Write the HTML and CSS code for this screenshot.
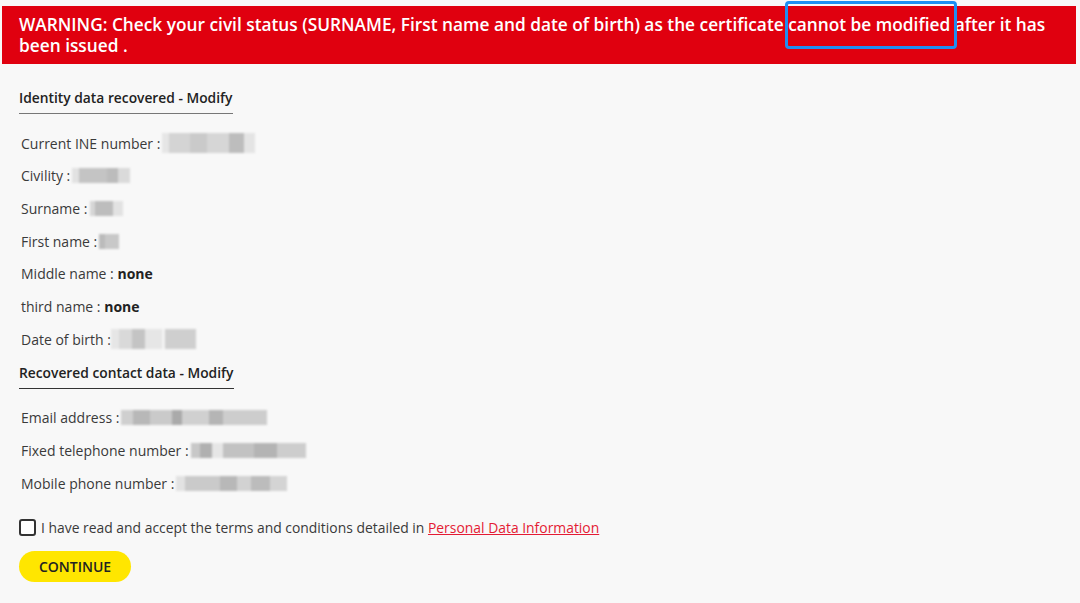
FILE: index.html
```html
<!DOCTYPE html>
<html lang="en">
<head>
    <meta charset="UTF-8">
    <meta name="viewport" content="width=device-width, initial-scale=1.0">
    <title>Certificate request</title>
    <link rel="stylesheet" href="styles.css">
</head>
<body>
    <div class="warning">
        WARNING: Check your civil status (SURNAME, First name and date of birth) as the certificate cannot be modified after it has been issued .
        <span class="highlight"></span>
    </div>

    <div class="content">
        <h2 class="section-title">Identity data recovered - Modify</h2>
        <div class="row">Current INE number :<span class="redacted r-ine"></span></div>
        <div class="row">Civility :<span class="redacted r-civ"></span></div>
        <div class="row">Surname :<span class="redacted r-sur"></span></div>
        <div class="row">First name :<span class="redacted r-first"></span></div>
        <div class="row">Middle name :&nbsp;<b>none</b></div>
        <div class="row">third name :&nbsp;<b>none</b></div>
        <div class="row">Date of birth :<span class="redacted r-dob"></span></div>

        <h2 class="section-title second">Recovered contact data - Modify</h2>
        <div class="row">Email address :<span class="redacted r-mail"></span></div>
        <div class="row">Fixed telephone number :<span class="redacted r-fixed"></span></div>
        <div class="row">Mobile phone number :<span class="redacted r-mobile"></span></div>

        <label class="terms">
            <span class="box"></span>
            I have read and accept the terms and conditions detailed in&nbsp;<a href="#">Personal Data Information</a>
        </label>

        <button class="continue">CONTINUE</button>
    </div>
</body>
</html>
```

FILE: styles.css
```css
body {
    margin: 0;
    background-color: #f8f8f8;
    font-family: "Open Sans", "Liberation Sans", sans-serif;
    color: #3a3a3a;
}

.warning {
    position: relative;
    margin: 6px 4px 0 2px;
    padding: 8px 17px 8px 17px;
    background-color: #e0000f;
    color: #ffffff;
    font-size: 17.3px;
    font-weight: 600;
    line-height: 21px;
}

.highlight {
    position: absolute;
    left: 783px;
    top: -5px;
    width: 166px;
    height: 42px;
    border: 3px solid #1f8ef1;
    border-radius: 4px;
}

.content {
    padding: 22px 19px 0 19px;
}

.section-title {
    display: inline-block;
    margin: 0;
    padding: 0 1px 5px 0;
    font-size: 13.8px;
    font-weight: 600;
    line-height: 20px;
    color: #222;
    border-bottom: 1px solid #777;
}

.section-title.second {
    margin-top: 7px;
    border-bottom-color: #333;
}

.row {
    display: flex;
    align-items: center;
    height: 32.67px;
    padding-left: 2px;
    font-size: 14px;
}

.section-title + .row {
    margin-top: 13px;
}

.row b {
    font-weight: 700;
    color: #222;
}

.redacted {
    display: inline-block;
    height: 15px;
    margin-left: 2px;
    filter: blur(1px);
}

.r-ine {
    width: 93px;
    height: 20px;
    background: linear-gradient(to right, #e6e6e6 0 8%, #d4d4d4 8% 30%, #cacaca 30% 48%, #d6d6d6 48% 72%, #bdbdbd 72% 88%, #e4e4e4 88% 100%);
}

.r-civ {
    width: 58px;
    background: linear-gradient(to right, #e2e2e2 0 12%, #c4c4c4 12% 60%, #bcbcbc 60% 80%, #dadada 80% 100%);
}

.r-sur {
    width: 33px;
    background: linear-gradient(to right, #d6d6d6 0 15%, #bdbdbd 15% 70%, #e2e2e2 70% 100%);
}

.r-first {
    width: 20px;
    background: linear-gradient(to right, #bbb 0 30%, #c8c8c8 30% 100%);
}

.r-dob {
    width: 85px;
    height: 20px;
    margin-left: 0;
    background: linear-gradient(to right, #e6e6e6 0 10%, #d9d9d9 10% 25%, #c4c4c4 25% 40%, #e6e6e6 40% 60%, #f3f3f3 60% 64%, #cfcfcf 64% 100%);
}

.r-mail {
    width: 146px;
    background: linear-gradient(to right, #cfcfcf 0 8%, #b8b8b8 8% 20%, #cacaca 20% 35%, #aaa 35% 42%, #d0d0d0 42% 60%, #b5b5b5 60% 70%, #cdcdcd 70% 100%);
}

.r-fixed {
    width: 115px;
    background: linear-gradient(to right, #c8c8c8 0 8%, #b0b0b0 8% 18%, #e6e6e6 18% 28%, #c2c2c2 28% 55%, #b4b4b4 55% 75%, #cdcdcd 75% 100%);
}

.r-mobile {
    width: 111px;
    background: linear-gradient(to right, #e2e2e2 0 8%, #cacaca 8% 40%, #b8b8b8 40% 55%, #d2d2d2 55% 68%, #bcbcbc 68% 85%, #d4d4d4 85% 100%);
}

.terms {
    display: flex;
    align-items: center;
    margin-top: 18px;
    font-size: 13.9px;
    line-height: 20px;
    cursor: pointer;
}

.box {
    display: inline-block;
    box-sizing: border-box;
    width: 17px;
    height: 17px;
    margin-right: 5px;
    border: 2px solid #333;
    border-radius: 3px;
    background-color: #fff;
}

.terms a {
    color: #e41b34;
    text-decoration: underline;
}

.continue {
    display: block;
    margin-top: 13px;
    width: 112px;
    height: 31px;
    border: none;
    border-radius: 16px;
    background-color: #ffe600;
    color: #222;
    font-family: "Open Sans", "Liberation Sans", sans-serif;
    font-size: 14px;
    font-weight: 600;
    cursor: pointer;
}
```
